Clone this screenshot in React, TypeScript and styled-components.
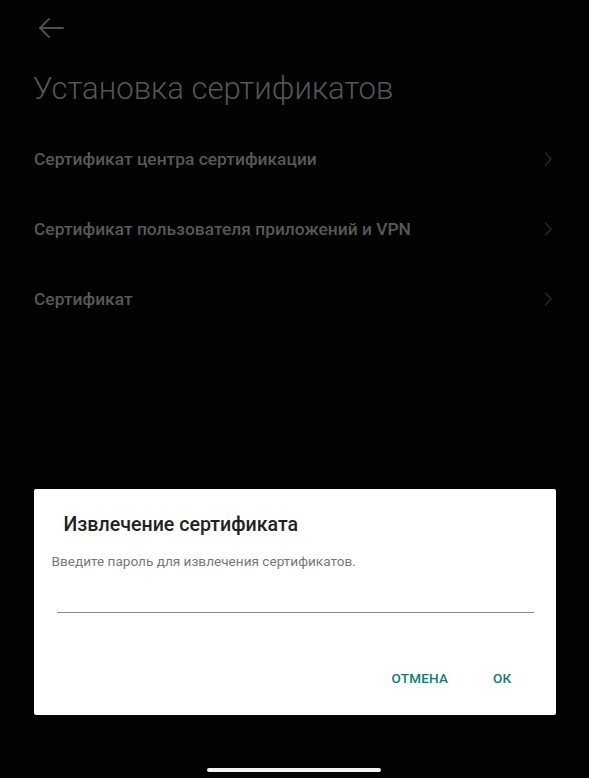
import React from "react";
import styled, { createGlobalStyle } from "styled-components";

const GlobalStyle = createGlobalStyle`
  html, body {
    margin: 0;
    padding: 0;
    background: #000;
  }
  body {
    font-family: Roboto, "Noto Sans", sans-serif;
  }
`;

const Screen = styled.div`
  position: relative;
  width: 589px;
  height: 778px;
  background: #020202;
  overflow: hidden;
  display: flex;
  flex-direction: column;
`;

const TopBar = styled.div`
  height: 56px;
  display: flex;
  align-items: center;
  padding-left: 37px;
`;

const Title = styled.h1`
  margin: 0;
  padding: 15px 0 0 33px;
  font-size: 31.1px;
  font-weight: 300;
  color: #555;
  line-height: 36px;
`;

const List = styled.div`
  margin-top: 17px;
  display: flex;
  flex-direction: column;
`;

const Row = styled.div`
  height: 70px;
  display: flex;
  align-items: center;
  justify-content: space-between;
  padding: 0 36px 0 34px;
`;

const RowLabel = styled.span`
  font-size: 17.4px;
  font-weight: 500;
  color: #585858;
`;

const Overlay = styled.div`
  position: absolute;
  inset: 0;
  display: flex;
  flex-direction: column;
  align-items: center;
`;

const Dialog = styled.div`
  margin-top: 489px;
  width: 522px;
  height: 226px;
  background: #fff;
  border-radius: 2px;
  display: flex;
  flex-direction: column;
  box-sizing: border-box;
`;

const DialogTitle = styled.div`
  padding: 23px 0 0 30px;
  font-size: 19.6px;
  font-weight: 500;
  color: #222;
  line-height: 26px;
`;

const Message = styled.div`
  padding: 14px 0 0 18px;
  font-size: 13.6px;
  color: #777;
  line-height: 18px;
`;

const Field = styled.div`
  margin: 41px 22px 0 23px;
  height: 1px;
  border-bottom: 1.5px solid #8a8a8a;
`;

const Buttons = styled.div`
  margin-top: auto;
  padding: 0 44px 29px 0;
  display: flex;
  justify-content: flex-end;
  gap: 45px;
`;

const Action = styled.span`
  font-size: 13.5px;
  font-weight: 500;
  color: #17786d;
  letter-spacing: 0.2px;
`;

const HomeBar = styled.div`
  position: absolute;
  left: 207px;
  bottom: 6px;
  width: 174px;
  height: 4px;
  border-radius: 2px;
  background: #f4f4f4;
`;

const BackArrow = () => (
  <svg width="28" height="22" viewBox="0 0 28 22" fill="none">
    <path
      d="M26 11H3M12 2L3 11l9 9"
      stroke="#505050"
      strokeWidth="2"
      strokeLinecap="round"
      strokeLinejoin="round"
    />
  </svg>
);

const Chevron = () => (
  <svg width="10" height="16" viewBox="0 0 10 16" fill="none">
    <path d="M2 1.5l6 6.5-6 6.5" stroke="#262626" strokeWidth="1.6" />
  </svg>
);

const items = [
  "Сертификат центра сертификации",
  "Сертификат пользователя приложений и VPN",
  "Сертификат",
];

export default function App() {
  return (
    <Screen>
      <GlobalStyle />
      <TopBar>
        <BackArrow />
      </TopBar>
      <Title>Установка сертификатов</Title>
      <List>
        {items.map((label) => (
          <Row key={label}>
            <RowLabel>{label}</RowLabel>
            <Chevron />
          </Row>
        ))}
      </List>
      <Overlay>
        <Dialog>
          <DialogTitle>Извлечение сертификата</DialogTitle>
          <Message>Введите пароль для извлечения сертификатов.</Message>
          <Field />
          <Buttons>
            <Action>ОТМЕНА</Action>
            <Action>ОК</Action>
          </Buttons>
        </Dialog>
      </Overlay>
      <HomeBar />
    </Screen>
  );
}
